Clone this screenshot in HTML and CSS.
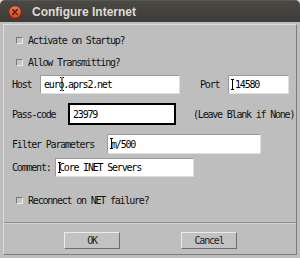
FILE: index.html
```html
<!DOCTYPE html>
<html lang="en">
<head>
    <meta charset="UTF-8">
    <title>Configure Internet</title>
    <link rel="stylesheet" href="styles.css">
</head>
<body>
    <div class="window">
        <div class="titlebar">
            <svg class="closeBtn" width="14" height="14" viewBox="0 0 14 14">
                <defs>
                    <linearGradient id="red" x1="0" y1="0" x2="0" y2="1">
                        <stop offset="0" stop-color="#f37a4c"/>
                        <stop offset="1" stop-color="#d8461f"/>
                    </linearGradient>
                </defs>
                <circle cx="7" cy="7" r="6.3" fill="url(#red)" stroke="#5c2514" stroke-width="0.9"/>
                <path d="M4.8 4.8L9.2 9.2M9.2 4.8L4.8 9.2" stroke="#3a1a10" stroke-width="1.4" stroke-linecap="round"/>
            </svg>
            <span class="title">Configure Internet</span>
        </div>

        <div class="frame">
            <div class="check first"><span class="box"></span>Activate on Startup?</div>
            <div class="check second"><span class="box"></span>Allow Transmitting?</div>

            <div class="row hostRow">
                <span class="lbl lblHost">Host</span>
                <div class="entry hostEntry">euro.aprs2.net
                    <svg class="ibeam mouse" width="4" height="14" viewBox="0 0 4 14"><path d="M0 0.5H1.5M2.5 0.5H4M2 1V13M0 13.5H1.5M2.5 13.5H4" stroke="#000" stroke-width="1"/></svg>
                </div>
                <span class="lbl lblPort">Port</span>
                <div class="entry portEntry"><svg class="caret" width="3" height="11" viewBox="0 0 3 11"><path d="M0 0.5H3M1.5 0.5V10.5M0 10.5H3" stroke="#000" stroke-width="1"/></svg>14580</div>
            </div>

            <div class="row passRow">
                <span class="lbl lblPass">Pass-code</span>
                <div class="entry passEntry">23979</div>
                <span class="hint">(Leave Blank if None)</span>
            </div>

            <div class="row filterRow">
                <span class="lbl lblFilter">Filter Parameters</span>
                <div class="entry filterEntry"><svg class="caret over" width="3" height="11" viewBox="0 0 3 11"><path d="M0 0.5H3M1.5 0.5V10.5M0 10.5H3" stroke="#000" stroke-width="1"/></svg>m/500</div>
            </div>

            <div class="row commentRow">
                <span class="lbl lblComment">Comment:</span>
                <div class="entry commentEntry"><svg class="caret over" width="3" height="11" viewBox="0 0 3 11"><path d="M0 0.5H3M1.5 0.5V10.5M0 10.5H3" stroke="#000" stroke-width="1"/></svg>Core INET Servers</div>
            </div>

            <div class="check third"><span class="box"></span>Reconnect on NET failure?</div>

            <div class="separator"></div>

            <div class="buttons">
                <button class="btn">OK</button>
                <button class="btn">Cancel</button>
            </div>
        </div>
    </div>
</body>
</html>
```

FILE: styles.css
```css
*{
    padding: 0;
    margin: 0;
    box-sizing: border-box;
}
body{
    width: 300px;
    height: 258px;
    background-color: #e2e2e2;
    font-family: "DejaVu Sans Mono", "Liberation Mono", monospace;
    font-size: 10px;
    letter-spacing: -1.2px;
    color: #111;
}
.window{
    width: 300px;
    height: 258px;
    background-color: #bebebe;
    border-radius: 5px 5px 0 0;
    overflow: hidden;
    display: flex;
    flex-direction: column;
}
.titlebar{
    height: 22px;
    flex-shrink: 0;
    background: linear-gradient(#4a4944, #3c3b37);
    border-top: 1px solid #57564f;
    display: flex;
    align-items: center;
    padding-left: 8px;
    gap: 10px;
}
.title{
    font-family: "Liberation Sans", Arial, sans-serif;
    font-weight: bold;
    font-size: 12px;
    letter-spacing: 0;
    color: #dfdbd2;
}
.frame{
    flex: 1;
    margin: 2px 3px 3px 3px;
    border: 1px solid;
    border-color: #dcdcdc #7c7c7c #7c7c7c #dcdcdc;
    display: flex;
    flex-direction: column;
}
.check{
    height: 18px;
    display: flex;
    align-items: center;
    padding-left: 12px;
}
.check.first{
    margin-top: 6px;
}
.check.second{
    margin-top: 4px;
}
.check.third{
    margin-top: 14px;
}
.box{
    width: 7px;
    height: 7px;
    margin-right: 5px;
    background-color: #c6c6c6;
    border: 1px solid;
    border-color: #7a7a7a #ececec #ececec #7a7a7a;
}
.row{
    display: flex;
    align-items: center;
    padding-left: 8px;
}
.hostRow{
    margin-top: 4px;
}
.passRow{
    margin-top: 9px;
}
.filterRow{
    margin-top: 9px;
}
.commentRow{
    margin-top: 4px;
}
.lblHost{ width: 28px; }
.lblPort{ width: 28px; margin-left: 20px; }
.lblPass{ width: 56px; }
.lblFilter{ width: 95px; }
.lblComment{ width: 43px; }
.entry{
    position: relative;
    height: 19px;
    display: flex;
    align-items: center;
    padding-left: 3px;
    background-color: #fff;
    border: 1px solid;
    border-color: #9a9a9a #dedede #dedede #9a9a9a;
    color: #000;
}
.hostEntry{ width: 140px; }
.portEntry{ width: 61px; padding-left: 2px; }
.passEntry{
    width: 108px;
    height: 22px;
    border: 2px solid #000;
    padding-left: 3px;
}
.filterEntry{ width: 154px; height: 20px; }
.commentEntry{ width: 139px; }
.hint{
    margin-left: 17px;
}
.caret{
    margin-right: 1px;
    flex-shrink: 0;
}
.caret.over{
    position: absolute;
    left: 2px;
    top: 3px;
}
.ibeam.mouse{
    position: absolute;
    left: 19px;
    top: 1px;
}
.separator{
    margin-top: 13px;
    height: 2px;
    border-top: 1px solid #8c8c8c;
    border-bottom: 1px solid #d2d2d2;
}
.buttons{
    margin-top: 8px;
    display: flex;
    padding-left: 60px;
    gap: 61px;
}
.btn{
    width: 56px;
    height: 17px;
    font-family: inherit;
    font-size: 10px;
    letter-spacing: -1.2px;
    color: #222;
    background-color: #c2c2c2;
    border: 1px solid;
    border-color: #ececec #6e6e6e #6e6e6e #ececec;
}
```
